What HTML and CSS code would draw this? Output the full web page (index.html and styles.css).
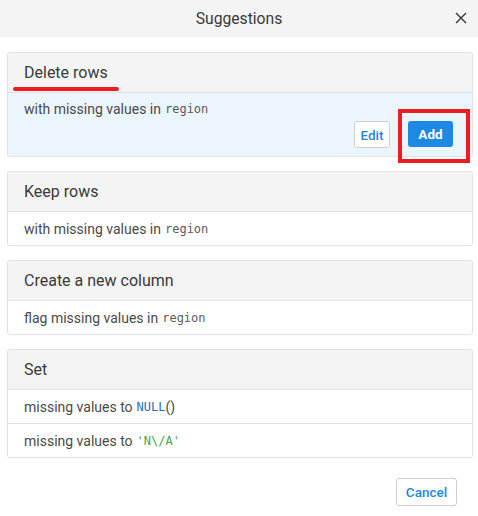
FILE: index.html
```html
<!DOCTYPE html>
<html>
<head>
<meta charset="utf-8">
<link rel="stylesheet" href="styles.css">
</head>
<body>
<div class="dialog">
  <div class="topbar">
    <span class="title">Suggestions</span>
    <svg class="close" width="12" height="12" viewBox="0 0 12 12"><path d="M1 1L11 11M11 1L1 11" stroke="#333" stroke-width="1.4" fill="none"/></svg>
  </div>
  <div class="list">
    <div class="card active">
      <div class="card-head"><span class="underlined">Delete rows</span></div>
      <div class="card-body">
        <div class="line">with missing values in <code class="col">region</code></div>
        <div class="actions">
          <button class="btn btn-edit">Edit</button>
          <button class="btn btn-add">Add</button>
        </div>
      </div>
    </div>
    <div class="card">
      <div class="card-head">Keep rows</div>
      <div class="row">with missing values in <code class="col">region</code></div>
    </div>
    <div class="card">
      <div class="card-head">Create a new column</div>
      <div class="row">flag missing values in <code class="col">region</code></div>
    </div>
    <div class="card">
      <div class="card-head">Set</div>
      <div class="row">missing values to <code class="fn">NULL</code>()</div>
      <div class="row">missing values to <code class="str">'N\/A'</code></div>
    </div>
  </div>
  <div class="footer">
    <button class="btn btn-cancel">Cancel</button>
  </div>
</div>
</body>
</html>
```
FILE: styles.css
```css
html, body {
  margin: 0;
  padding: 0;
  background: #fff;
}
body {
  font-family: Roboto, "Liberation Sans", sans-serif;
  color: #333;
  width: 478px;
  height: 516px;
  overflow: hidden;
}
.dialog {
  display: flex;
  flex-direction: column;
}
.topbar {
  height: 37px;
  background: #f4f4f4;
  display: flex;
  align-items: center;
  justify-content: center;
  position: relative;
}
.title {
  font-size: 15.7px;
  color: #3a3a3a;
}
.close {
  position: absolute;
  right: 11px;
  top: 12px;
}
.list {
  display: flex;
  flex-direction: column;
  gap: 14px;
  padding: 15px 5px 0 7px;
}
.card {
  border: 1px solid #e2e2e2;
  border-radius: 3px;
  background: #fff;
  position: relative;
}
.card-head {
  height: 39px;
  background: #f4f4f4;
  border-bottom: 1px solid #e2e2e2;
  display: flex;
  align-items: center;
  padding-left: 16px;
  font-size: 16px;
  color: #3a3a3a;
  border-radius: 3px 3px 0 0;
}
.underlined {
  position: relative;
}
.underlined::after {
  content: "";
  position: absolute;
  left: -11px;
  right: -11px;
  bottom: -9px;
  height: 4px;
  border-radius: 2px;
  background: #ed1c24;
}
.row {
  height: 33px;
  display: flex;
  align-items: center;
  padding-left: 16px;
  font-size: 14px;
  color: #4a4a4a;
}
.row + .row {
  border-top: 1px solid #e2e2e2;
}
code {
  font-family: "DejaVu Sans Mono", "Liberation Mono", monospace;
  font-size: 12px;
  margin-left: 4px;
}
.col { color: #5a5a5a; }
.fn { color: #2a6db3; }
.str { color: #4ea54a; }
.card-body {
  background: #ebf5fe;
  padding: 7px 19px 8px 16px;
  font-size: 14px;
  color: #4a4a4a;
  border-radius: 0 0 3px 3px;
}
.line {
  height: 18px;
  display: flex;
  align-items: center;
}
.actions {
  display: flex;
  justify-content: flex-end;
  gap: 18px;
  margin-top: 3px;
}
.btn {
  font-family: Roboto, "Liberation Sans", sans-serif;
  font-size: 13.5px;
  font-weight: 500;
  border-radius: 3px;
  cursor: pointer;
}
.btn-edit {
  height: 27px;
  width: 36px;
  background: #fff;
  border: 1px solid #cfcfcf;
  color: #1e88e5;
  padding: 0;
}
.btn-add {
  height: 26px;
  width: 45px;
  background: #1e88e5;
  border: none;
  color: #fff;
  font-weight: 700;
  padding: 0;
  position: relative;
}
.btn-add::after {
  content: "";
  position: absolute;
  left: -10px;
  right: -17px;
  top: -12px;
  bottom: -16px;
  border: 4px solid #ed1c24;
  pointer-events: none;
}
.footer {
  display: flex;
  justify-content: flex-end;
  padding: 20px 21px 0 0;
}
.btn-cancel {
  height: 28px;
  width: 61px;
  background: #fff;
  border: 1px solid #cfcfcf;
  color: #1e88e5;
  padding: 0;
}
```
